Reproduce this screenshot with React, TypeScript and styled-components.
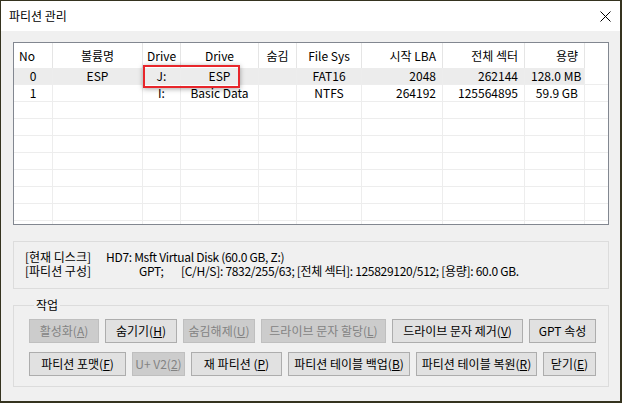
import * as React from 'react';
import styled, { createGlobalStyle } from 'styled-components';

const GlobalStyle = createGlobalStyle`
  html, body {
    margin: 0;
    padding: 0;
    background: #35331f;
  }
  body {
    font-family: "Noto Sans CJK KR", "Liberation Sans", sans-serif;
    font-size: 12px;
    color: #000;
  }
`;

const Window = styled.div`
  margin: 1px 0 0 1px;
  width: 619px;
  height: 400px;
  background: #f0f0f0;
  display: flex;
  flex-direction: column;
  overflow: hidden;
`;

const TitleBar = styled.div`
  height: 30px;
  flex: none;
  background: #fff;
  display: flex;
  align-items: center;
  justify-content: space-between;
  padding: 0 9px 0 8px;
  line-height: 14px;
`;

const Body = styled.div`
  padding: 11px 11px 0 12px;
  display: flex;
  flex-direction: column;
`;

// list view
const List = styled.div`
  position: relative;
  height: 181px;
  border: 1px solid #828790;
  background: #fff;
  overflow: hidden;
`;

const cols = '39px 90px 38px 78px 38px 65px 81px 82px 60px 1fr';

const HeadRow = styled.div`
  display: grid;
  grid-template-columns: ${cols};
  height: 25px;
`;

const Row = styled.div<{ $sel?: boolean }>`
  display: grid;
  grid-template-columns: ${cols};
  height: 17px;
  box-sizing: border-box;
  border-bottom: 1px solid #ededed;
  line-height: 16px;
  background: ${p => (p.$sel ? 'linear-gradient(90deg, #ececec 570px, #fff 570px)' : '#fff')};
`;

const HeadCell = styled.div<{ $align?: string }>`
  border-right: 1px solid #e5e5e5;
  display: flex;
  align-items: center;
  justify-content: ${p => p.$align || 'center'};
  padding: 0 6px 0 ${p => (p.$align === 'flex-start' ? 5 : 6)}px;
  white-space: nowrap;
  &:last-child { border-right: none; }
`;

const Cell = styled.div<{ $align?: string }>`
  border-right: 1px solid #ededed;
  text-align: ${p => p.$align || 'center'};
  padding: 0 6px;
  white-space: nowrap;
  overflow: hidden;
  &:last-child { border-right: none; }
`;

const Marker = styled.div`
  position: absolute;
  left: 129px;
  top: 22px;
  width: 97px;
  height: 23px;
  box-sizing: border-box;
  border: 2px solid #e8262b;
  box-shadow: 0 1px 5px rgba(0, 0, 0, 0.35);
`;

// info box
const InfoBox = styled.div`
  margin-top: 16px;
  height: 48px;
  box-sizing: border-box;
  border: 1px solid #dcdcdc;
  padding: 8px 0 0 11px;
  line-height: 14px;
`;

const InfoLine = styled.div`
  display: flex;
  white-space: nowrap;
`;

const InfoLabel = styled.span`
  display: inline-block;
  width: 81px;
`;

const InfoValue = styled.span`
  letter-spacing: -0.3px;
`;

const InfoField = styled(InfoValue)<{ $w?: number; $pad?: number }>`
  display: inline-block;
  box-sizing: border-box;
  width: ${p => (p.$w ? p.$w + 'px' : 'auto')};
  padding-left: ${p => p.$pad || 0}px;
`;

// work group
const Group = styled.fieldset`
  margin: 9px 0 0;
  padding: 7px 0 10px 15px;
  border: 1px solid #dcdcdc;
  min-width: 0;
`;

const Legend = styled.legend`
  margin-left: 5px;
  padding: 0 2px;
  line-height: 14px;
`;

const BtnRow = styled.div`
  display: flex;
  gap: 6px;
  & + & { margin-top: 9px; }
`;

const Btn = styled.button<{ $w: number }>`
  width: ${p => p.$w}px;
  height: 24px;
  box-sizing: border-box;
  padding: 0;
  font: inherit;
  font-size: 12px;
  line-height: 14px;
  white-space: nowrap;
  border: 1px solid ${p => (p.disabled ? '#bfbfbf' : '#adadad')};
  background: ${p => (p.disabled ? '#cccccc' : '#e1e1e1')};
  color: ${p => (p.disabled ? '#838383' : '#000')};
`;

const Key = styled.u`
  text-underline-offset: 1px;
`;

const CloseIcon = () => (
  <svg width="11" height="11" viewBox="0 0 11 11">
    <path d="M0.5 0.5 L10.5 10.5 M10.5 0.5 L0.5 10.5" stroke="#000" strokeWidth="1" fill="none" />
  </svg>
);

const heads: [string, string][] = [
  ['No', 'flex-start'],
  ['볼륨명', 'center'],
  ['Drive', 'center'],
  ['Drive', 'center'],
  ['숨김', 'center'],
  ['File Sys', 'center'],
  ['시작 LBA', 'flex-end'],
  ['전체 섹터', 'flex-end'],
  ['용량', 'flex-end'],
  ['', 'center'],
];

const aligns = ['center', 'center', 'center', 'center', 'center', 'center', 'right', 'right', 'right', 'center'];

const rows = [
  ['0', 'ESP', 'J:', 'ESP', '', 'FAT16', '2048', '262144', '128.0 MB', ''],
  ['1', '', 'I:', 'Basic Data', '', 'NTFS', '264192', '125564895', '59.9 GB', ''],
];

const empty = Array.from({ length: 8 }, () => Array(10).fill(''));

const B = (label: string, key?: string, tail = ')') =>
  key ? (
    <>
      {label}
      <Key>{key}</Key>
      {tail}
    </>
  ) : (
    label
  );

export default function App() {
  return (
    <>
      <GlobalStyle />
      <Window>
        <TitleBar>
          <span>파티션 관리</span>
          <CloseIcon />
        </TitleBar>
        <Body>
          <List>
            <HeadRow>
              {heads.map(([h, a], i) => (
                <HeadCell key={i} $align={a}>{h}</HeadCell>
              ))}
            </HeadRow>
            {rows.concat(empty).map((r, i) => (
              <Row key={i} $sel={i === 0}>
                {r.map((c, j) => (
                  <Cell key={j} $align={aligns[j]}>{c}</Cell>
                ))}
              </Row>
            ))}
            <Marker />
          </List>

          <InfoBox>
            <InfoLine>
              <InfoLabel>[현재 디스크]</InfoLabel>
              <InfoValue>HD7: Msft Virtual Disk (60.0 GB, Z:)</InfoValue>
            </InfoLine>
            <InfoLine>
              <InfoLabel>[파티션 구성]</InfoLabel>
              <InfoField $w={75} $pad={33}>GPT;</InfoField>
              <InfoValue>[C/H/S]: 7832/255/63; [전체 섹터]: 125829120/512; [용량]: 60.0 GB.</InfoValue>
            </InfoLine>
          </InfoBox>

          <Group>
            <Legend>작업</Legend>
            <BtnRow>
              <Btn $w={70} disabled>{B('활성화(', 'A')}</Btn>
              <Btn $w={72}>{B('숨기기(', 'H')}</Btn>
              <Btn $w={72} disabled>{B('숨김해제(', 'U')}</Btn>
              <Btn $w={125} disabled>{B('드라이브 문자 할당(', 'L')}</Btn>
              <Btn $w={131}>{B('드라이브 문자 제거(', 'V')}</Btn>
              <Btn $w={67}>GPT 속성</Btn>
            </BtnRow>
            <BtnRow>
              <Btn $w={97}>{B('파티션 포맷(', 'F')}</Btn>
              <Btn $w={53} disabled>{B('U+ V2(', '2')}</Btn>
              <Btn $w={91}>{B('재 파티션 (', 'P')}</Btn>
              <Btn $w={122}>{B('파티션 테이블 백업(', 'B')}</Btn>
              <Btn $w={121}>{B('파티션 테이블 복원(', 'R')}</Btn>
              <Btn $w={53}>{B('닫기(', 'E')}</Btn>
            </BtnRow>
          </Group>
        </Body>
      </Window>
    </>
  );
}
